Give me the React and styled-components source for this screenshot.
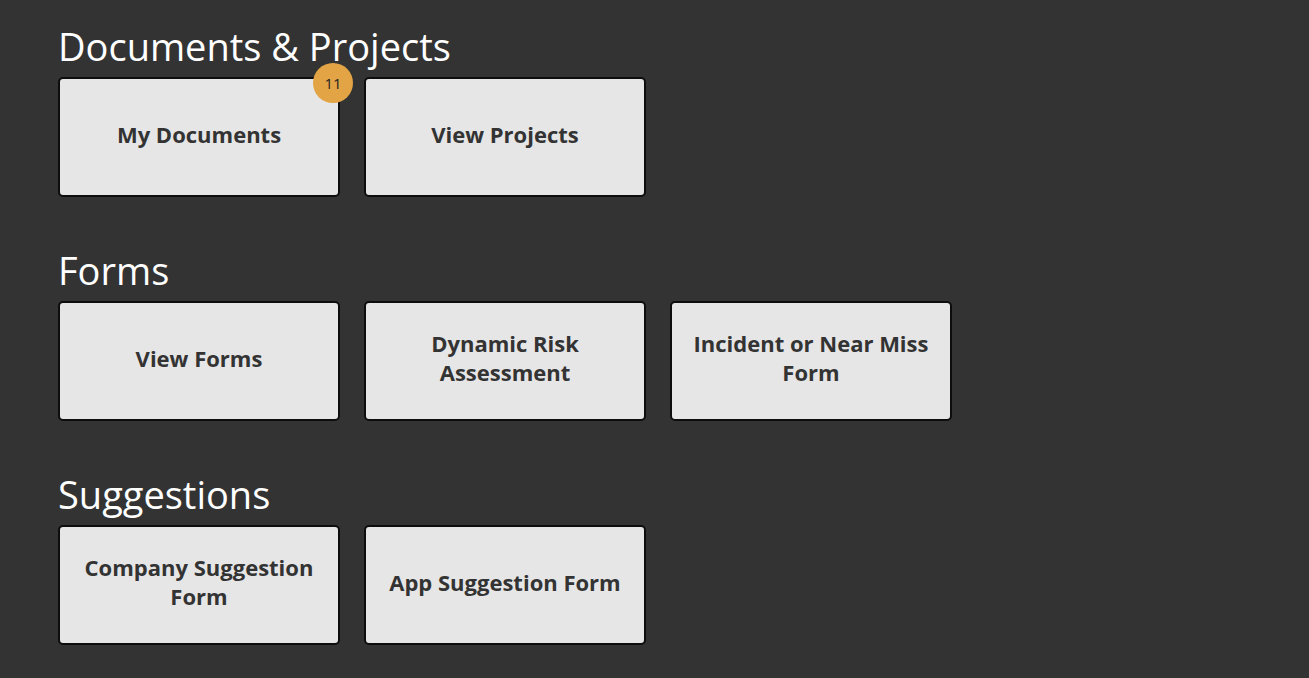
import styled, { createGlobalStyle } from 'styled-components';

const GlobalStyle = createGlobalStyle`
  html, body {
    margin: 0;
    padding: 0;
    background: #333333;
    font-family: "Open Sans", "Noto Sans", sans-serif;
  }
`;

const sections = [
  {
    title: 'Documents & Projects',
    items: [
      { label: 'My Documents', badge: 11 },
      { label: 'View Projects' },
    ],
  },
  {
    title: 'Forms',
    items: [
      { label: 'View Forms' },
      { label: 'Dynamic Risk Assessment' },
      { label: 'Incident or Near Miss Form' },
    ],
  },
  {
    title: 'Suggestions',
    items: [
      { label: 'Company Suggestion Form' },
      { label: 'App Suggestion Form' },
    ],
  },
];

const App = () => {
  return (
    <Page>
      <GlobalStyle />
      {sections.map((s) => (
        <Section key={s.title}>
          <Heading>{s.title}</Heading>
          <CardRow>
            {s.items.map((item) => (
              <Card key={item.label}>
                <CardLabel>{item.label}</CardLabel>
                {item.badge && <Badge>{item.badge}</Badge>}
              </Card>
            ))}
          </CardRow>
        </Section>
      ))}
    </Page>
  );
};

export default App;

const Page = styled.div`
  padding: 25px 58px 0;
  display: flex;
  flex-direction: column;
  gap: 52px;
`;

const Section = styled.section`
  display: flex;
  flex-direction: column;
  gap: 10px;
`;

const Heading = styled.h2`
  margin: 0;
  font-size: 38px;
  font-weight: 400;
  line-height: 42px;
  color: #ffffff;
`;

const CardRow = styled.div`
  display: flex;
  gap: 24px;
`;

const Card = styled.button`
  position: relative;
  box-sizing: border-box;
  width: 282px;
  height: 120px;
  padding: 0 16px 6px;
  display: flex;
  align-items: center;
  justify-content: center;
  background: #e6e6e6;
  border: 2px solid #0d0d0d;
  border-radius: 5px;
  cursor: pointer;
  font-family: inherit;
`;

const CardLabel = styled.span`
  font-size: 22px;
  font-weight: 700;
  line-height: 29px;
  color: #333333;
  text-align: center;
`;

const Badge = styled.span`
  position: absolute;
  top: -16px;
  right: -15px;
  width: 40px;
  height: 40px;
  border-radius: 50%;
  background: #e3a446;
  color: #222222;
  font-size: 15px;
  display: flex;
  align-items: center;
  justify-content: center;
`;
